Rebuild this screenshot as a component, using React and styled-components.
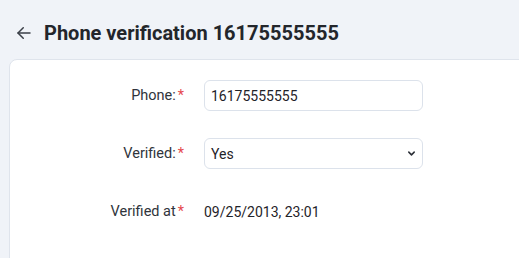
import React from 'react';
import styled, { createGlobalStyle } from 'styled-components';

const GlobalStyle = createGlobalStyle`
    html, body {
        margin: 0;
        padding: 0;
        background: #f0f3f8;
        font-family: Roboto, "Liberation Sans", sans-serif;
        color: #1f2937;
        overflow: hidden;
    }
`;

const fields = [
    { label: 'Phone:', kind: 'input', value: '16175555555' },
    { label: 'Verified:', kind: 'select', value: 'Yes' },
    { label: 'Verified at', kind: 'text', value: '09/25/2013, 23:01' },
];

const BackArrow = () => (
    <svg width="18" height="18" viewBox="0 0 24 24" fill="none"
        stroke="#3a3f47" strokeWidth="2" strokeLinecap="round" strokeLinejoin="round">
        <path d="M20 12H4" />
        <path d="M11 5l-7 7 7 7" />
    </svg>
);

const Chevron = () => (
    <svg width="9" height="9" viewBox="0 0 10 10" fill="none"
        stroke="#2b2f36" strokeWidth="1.7" strokeLinecap="round" strokeLinejoin="round">
        <path d="M2 3.5l3 3 3-3" />
    </svg>
);

export default function App() {
    return (
        <Page>
            <GlobalStyle />
            <Header>
                <BackButton><BackArrow /></BackButton>
                <Title>Phone verification 16175555555</Title>
            </Header>
            <Card>
                <Form>
                    {fields.map((f) => (
                        <React.Fragment key={f.label}>
                            <Label>
                                {f.label}
                                <Required>*</Required>
                            </Label>
                            {f.kind === 'input' && <TextInput defaultValue={f.value} />}
                            {f.kind === 'select' && (
                                <SelectBox>
                                    <span>{f.value}</span>
                                    <Chevron />
                                </SelectBox>
                            )}
                            {f.kind === 'text' && <Value>{f.value}</Value>}
                        </React.Fragment>
                    ))}
                </Form>
            </Card>
        </Page>
    );
}

const Page = styled.div`
    width: 519px;
    height: 258px;
    overflow: hidden;
`;

const Header = styled.header`
    display: flex;
    align-items: center;
    height: 59px;
    padding-left: 14px;
    box-sizing: border-box;
    padding-top: 7px;
`;

const BackButton = styled.div`
    display: flex;
    align-items: center;
    justify-content: center;
    width: 20px;
    height: 20px;
    margin-right: 10px;
`;

const Title = styled.h1`
    margin: 0;
    font-size: 20px;
    font-weight: 700;
    color: #23262b;
`;

const Card = styled.section`
    margin-left: 9px;
    width: 560px;
    height: 260px;
    background: #fff;
    border: 1px solid #dfe4ec;
    border-radius: 8px 0 0 0;
`;

const Form = styled.div`
    display: grid;
    grid-template-columns: 174px 219px;
    column-gap: 20px;
    grid-auto-rows: 31px;
    row-gap: 27px;
    padding-top: 20px;
    align-items: center;
`;

const Label = styled.div`
    text-align: right;
    font-size: 14.5px;
    color: #30343b;
`;

const Required = styled.span`
    color: #e5484d;
    margin-left: 2px;
`;

const TextInput = styled.input`
    box-sizing: border-box;
    height: 31px;
    width: 219px;
    border: 1px solid #dce2eb;
    border-radius: 6px;
    padding: 0 6px;
    font-family: Roboto, "Liberation Sans", sans-serif;
    font-size: 14px;
    color: #1f2329;
    outline: none;
    background: #fff;
`;

const SelectBox = styled.div`
    box-sizing: border-box;
    height: 31px;
    width: 219px;
    border: 1px solid #dce2eb;
    border-radius: 6px;
    padding: 0 6px;
    display: flex;
    align-items: center;
    justify-content: space-between;
    font-size: 14px;
    color: #1f2329;
`;

const Value = styled.div`
    font-size: 14px;
    color: #1f2329;
`;
